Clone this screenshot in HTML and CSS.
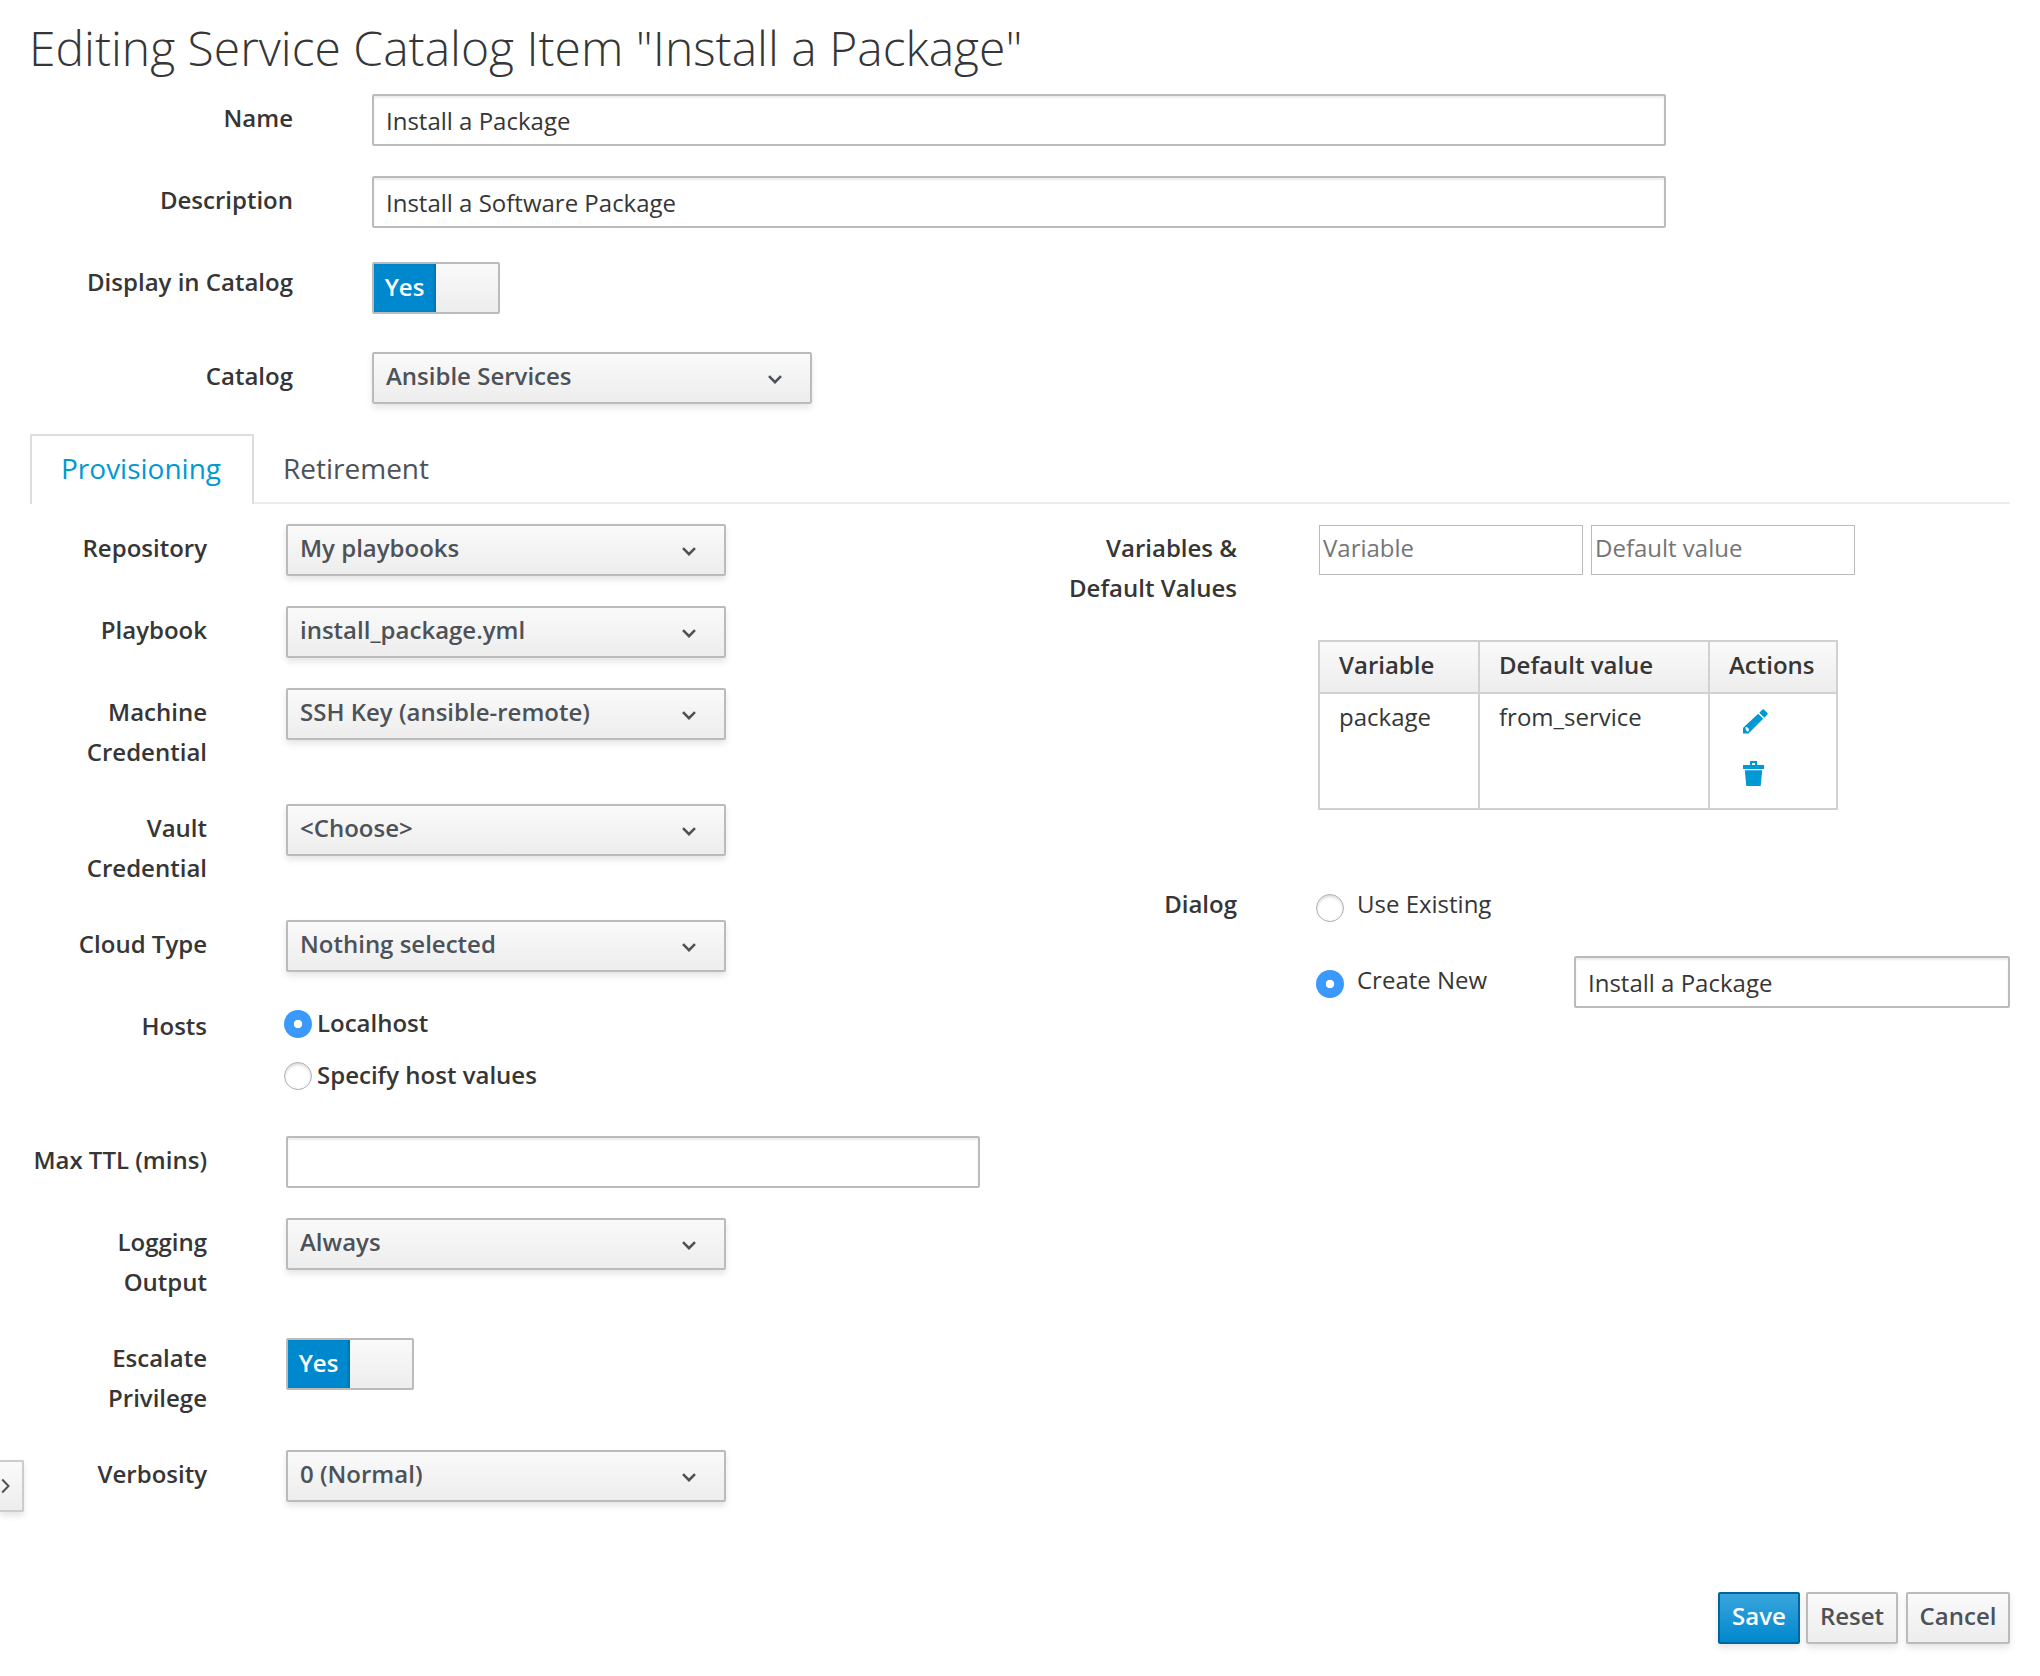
FILE: index.html
```html
<!DOCTYPE html>
<html lang="en">
<head>
<meta charset="utf-8">
<title>Editing Service Catalog Item</title>
<link rel="stylesheet" href="styles.css">
</head>
<body>
<svg class="sprite" aria-hidden="true">
  <symbol id="angle-down" viewBox="0 0 14 9"><path d="M1 1.200 7 7.200l6-6" fill="none" stroke="currentColor" stroke-width="2.600"/></symbol>
</svg>
<main class="page">
  <h1 class="title">Editing Service Catalog Item "Install a Package"</h1>

  <section class="form basic">
    <div class="row"><label class="label">Name</label><div class="input">Install a Package</div></div>
    <div class="row"><label class="label">Description</label><div class="input">Install a Software Package</div></div>
    <div class="row row-switch"><label class="label">Display in Catalog</label><div class="switch"><span class="switch-on">Yes</span></div></div>
    <div class="row"><label class="label">Catalog</label><button class="select">Ansible Services<svg class="caret"><use href="#angle-down"/></svg></button></div>
  </section>

  <nav class="tabs"><a class="tab active">Provisioning</a><a class="tab">Retirement</a></nav>

  <div class="columns">
    <section class="form left">
      <div class="row"><label class="label">Repository</label><button class="select">My playbooks<svg class="caret"><use href="#angle-down"/></svg></button></div>
      <div class="row"><label class="label">Playbook</label><button class="select">install_package.yml<svg class="caret"><use href="#angle-down"/></svg></button></div>
      <div class="row"><label class="label">Machine<br>Credential</label><button class="select">SSH Key (ansible-remote)<svg class="caret"><use href="#angle-down"/></svg></button></div>
      <div class="row"><label class="label">Vault<br>Credential</label><button class="select">&lt;Choose&gt;<svg class="caret"><use href="#angle-down"/></svg></button></div>
      <div class="row"><label class="label">Cloud Type</label><button class="select">Nothing selected<svg class="caret"><use href="#angle-down"/></svg></button></div>
      <div class="row row-hosts"><label class="label">Hosts</label>
        <div class="radios">
          <div class="radio-line"><span class="radio checked"></span><span class="radio-text">Localhost</span></div>
          <div class="radio-line"><span class="radio"></span><span class="radio-text">Specify host values</span></div>
        </div>
      </div>
      <div class="row"><label class="label">Max TTL (mins)</label><div class="input"></div></div>
      <div class="row"><label class="label">Logging<br>Output</label><button class="select">Always<svg class="caret"><use href="#angle-down"/></svg></button></div>
      <div class="row"><label class="label">Escalate<br>Privilege</label><div class="switch"><span class="switch-on">Yes</span></div></div>
      <div class="row"><label class="label">Verbosity</label><button class="select">0 (Normal)<svg class="caret"><use href="#angle-down"/></svg></button></div>
    </section>

    <section class="form right">
      <div class="row row-vars"><label class="label">Variables &amp;<br>Default Values</label>
        <div class="vars">
          <div class="var-inputs"><div class="plain">Variable</div><div class="plain">Default value</div></div>
          <table class="table">
            <thead><tr><th class="c1">Variable</th><th class="c2">Default value</th><th class="c3">Actions</th></tr></thead>
            <tbody><tr><td>package</td><td>from_service</td><td>
              <div class="actions">
                <svg class="icon" viewBox="0 0 25 25"><path d="M19.200.800q1-1 2 0l3 3q1 1 0 2L21.300 8.700 16.300 3.700zM15.200 4.800l5 5L7.500 22.500 5.500 24.500H0v-5.500l2-2z" fill="#0099d3"/><path d="M2.300 18.500l1.500-.500 1.700 1.500.500 2.300-1.300.900-1.700-1.700z" fill="#fff"/></svg>
                <svg class="icon" viewBox="0 0 25 25"><path d="M0 4h7V0h7v4h7v4H0zM9 2v2h3V2zM1.800 9.300h17.400L17.700 25H3.300z" fill="#0099d3" fill-rule="evenodd"/></svg>
              </div>
            </td></tr></tbody>
          </table>
        </div>
      </div>
      <div class="row row-dialog"><label class="label">Dialog</label>
        <div class="dialog">
          <div class="choice"><span class="radio"></span><span class="choice-text">Use Existing</span></div>
          <div class="choice"><span class="radio checked"></span><span class="choice-text">Create New</span><div class="input">Install a Package</div></div>
        </div>
      </div>
    </section>
  </div>

  <footer class="buttons">
    <button class="btn save">Save</button><button class="btn reset">Reset</button><button class="btn cancel">Cancel</button>
  </footer>
</main>
<button class="drawer"><svg class="drawer-icon" viewBox="0 0 10 16"><path d="M2.200 1.500 8.500 8l-6.300 6.500" fill="none" stroke="#4d5258" stroke-width="2"/></svg></button>
</body>
</html>
```
FILE: styles.css
```css
* { box-sizing: border-box; }
body { margin: 0; background: #fff; color: #363636; font: 24px/40px "Open Sans", sans-serif; }
.sprite { position: absolute; width: 0; height: 0; }
.page { width: 2040px; height: 1676px; padding: 21px 30px 32px; display: flex; flex-direction: column; overflow: hidden; }
.title { margin: 0 0 0 -1px; height: 73px; font-size: 48px; line-height: 54px; font-weight: 300; white-space: nowrap; }

.row { display: flex; align-items: flex-start; min-height: 52px; margin-bottom: 30px; }
.label { flex: none; padding: 4px 0 2px; text-align: right; font-weight: 600; white-space: nowrap; }
.basic .label { width: 263px; margin-right: 79px; }
.basic .input { width: 1294px; }
.row-switch { min-height: 64px; }

.input { height: 52px; padding: 5px 12px; border: 2px solid #bbb; border-radius: 2px; box-shadow: inset 0 2px 2px rgba(3,3,3,.075); line-height: 40px; }
.select { display: flex; justify-content: space-between; width: 440px; height: 52px; padding: 2px 28px 6px 12px; border: 2px solid #bbb; border-radius: 2px; background: linear-gradient(#fafafa, #ededed); box-shadow: 0 4px 6px rgba(3,3,3,.1); color: #4d5258; font: 600 24px/40px "Open Sans", sans-serif; }
.caret { width: 14px; height: 9px; margin-top: 19px; }
.switch { width: 128px; height: 52px; margin-top: 4px; border: 2px solid #bbb; border-radius: 2px; background: linear-gradient(#fafafa, #ededed); }
.switch-on { display: block; width: 62px; height: 48px; padding: 3px 1px 0 0; background: #0088ce; box-shadow: inset -2px 0 2px rgba(0,0,0,.15); color: #fff; font-weight: 600; text-align: center; }

.tabs { display: flex; height: 70px; border-bottom: 2px solid #ededed; }
.tab { height: 70px; padding: 13px 29px 0; font-size: 28px; line-height: 42px; color: #4d5258; }
.tab.active { width: 224px; padding-top: 11px; border: 2px solid #ddd; border-bottom: 0; background: #fff; color: #0099d3; }

.columns { display: grid; grid-template-columns: 990px 990px; padding-top: 20px; }
.left .label { width: 177px; margin-right: 79px; }
.left .input { width: 694px; }
.row-hosts { height: 104px; }
.radios { margin: 2px 0 0 -2px; font-weight: 600; }
.radio-line { display: flex; align-items: center; height: 40px; margin-bottom: 12px; gap: 5px; }
.radio-text { padding-bottom: 2px; }
.radio { flex: none; width: 28px; height: 28px; border: 1.5px solid #b0b0b0; border-radius: 50%; background: #fff; box-shadow: inset 0 2px 3px rgba(0,0,0,.15); }
.radio.checked { border: 0; background: radial-gradient(circle, #fff 0 3.8px, #3b99fc 4.6px); box-shadow: none; }

.right .label { width: 217px; margin-right: 81px; }
.row-vars { height: 326px; }
.var-inputs { display: flex; gap: 8px; padding: 1px 0 0 1px; }
.plain { width: 264px; height: 50px; padding: 2px 3px; border: 1px solid #bbb; color: #757575; }
.table { margin: 65px 0 0; border-collapse: collapse; table-layout: fixed; width: 520px; }
.table th, .table td { border: 2px solid #d1d1d1; padding: 3px 19px; text-align: left; vertical-align: top; }
.table th { height: 52px; padding-bottom: 7px; background: linear-gradient(#fafafa, #ededed); font-weight: 600; }
.table td { height: 116px; }
.c1 { width: 160px; }
.c2 { width: 230px; }
.actions { display: flex; flex-direction: column; gap: 27px; padding: 12px 0 0 14px; }
.icon { width: 25px; height: 25px; }
.choice { display: flex; height: 52px; margin-bottom: 24px; line-height: 40px; padding-top: 4px; }
.choice-text { flex: none; width: 217px; }
.choice .radio { margin: 10px 13px 0 -2px; }
.choice .input { width: 436px; margin-top: -4px; }

.buttons { display: flex; justify-content: flex-end; margin-top: auto; }
.btn { height: 52px; padding: 0 0 4px; border: 2px solid #bbb; border-radius: 2px; background: linear-gradient(#fafafa, #ededed); box-shadow: 0 4px 6px rgba(3,3,3,.1); color: #4d5258; font: 600 24px/40px "Open Sans", sans-serif; }
.save { width: 82px; border-color: #00659c; background: linear-gradient(#39a5dc, #0088ce); color: #fff; }
.reset { width: 92px; margin: 0 8px 0 6px; }
.cancel { width: 104px; }
.drawer { position: absolute; left: 0; top: 1460px; width: 24px; height: 52px; padding: 0; border: 2px solid #ccc; border-left: 0; border-radius: 0 2px 2px 0; background: linear-gradient(#fafafa, #ededed); box-shadow: 0 4px 6px rgba(3,3,3,.1); }
.drawer-icon { display: block; width: 10px; height: 16px; }
```
